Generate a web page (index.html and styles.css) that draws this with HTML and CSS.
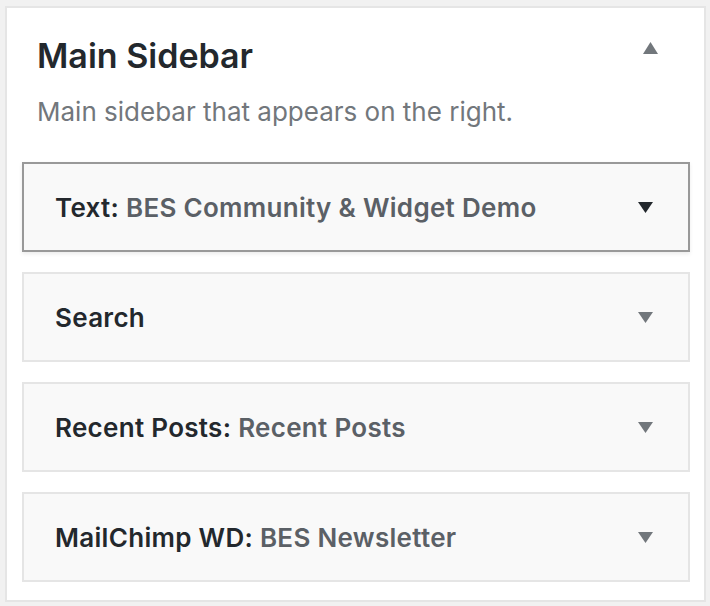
FILE: index.html
```html
<!DOCTYPE html>
<html lang="en">
<head>
<meta charset="utf-8">
<title>Main Sidebar</title>
<link rel="stylesheet" href="styles.css">
</head>
<body>
<section class="panel">
  <header class="panel-head">
    <h2 class="panel-title">Main Sidebar</h2>
    <span class="toggle toggle-up" aria-hidden="true">
      <svg width="15" height="12" viewBox="0 0 15 12"><path d="M7.5 0 L15 12 L0 12 Z" fill="#72777c"/></svg>
    </span>
  </header>
  <p class="panel-desc">Main sidebar that appears on the right.</p>
  <div class="widgets">
    <div class="widget widget-active">
      <span class="widget-title">Text:<span class="in-title"> BES Community &amp; Widget Demo</span></span>
      <span class="toggle"><svg width="15" height="11" viewBox="0 0 15 11"><path d="M0 0 L15 0 L7.5 11 Z" fill="#23282d"/></svg></span>
    </div>
    <div class="widget">
      <span class="widget-title">Search</span>
      <span class="toggle"><svg width="15" height="11" viewBox="0 0 15 11"><path d="M0 0 L15 0 L7.5 11 Z" fill="#72777c"/></svg></span>
    </div>
    <div class="widget">
      <span class="widget-title">Recent Posts:<span class="in-title"> Recent Posts</span></span>
      <span class="toggle"><svg width="15" height="11" viewBox="0 0 15 11"><path d="M0 0 L15 0 L7.5 11 Z" fill="#72777c"/></svg></span>
    </div>
    <div class="widget">
      <span class="widget-title">MailChimp WD:<span class="in-title"> BES Newsletter</span></span>
      <span class="toggle"><svg width="15" height="11" viewBox="0 0 15 11"><path d="M0 0 L15 0 L7.5 11 Z" fill="#72777c"/></svg></span>
    </div>
  </div>
</section>
</body>
</html>
```

FILE: styles.css
```css
html, body {
  margin: 0;
  background: #f1f1f1;
}
body {
  padding: 6px 4px 4px 5px;
  font-family: Inter, "Noto Sans", "Liberation Sans", sans-serif;
  color: #23282d;
}
.panel {
  box-sizing: border-box;
  width: 701px;
  height: 596px;
  background: #fff;
  border: 2px solid #e5e5e5;
  padding: 0 14px 0 15px;
}
.panel-head {
  display: flex;
  justify-content: space-between;
  align-items: flex-start;
  padding: 28px 32px 0 15px;
}
.panel-title {
  margin: 0;
  font-size: 34px;
  font-weight: 600;
  line-height: 40px;
}
.toggle-up {
  display: flex;
  margin-top: 6px;
}
.panel-desc {
  margin: 20px 0 0 15px;
  font-size: 26px;
  line-height: 32px;
  color: #72777c;
}
.widgets {
  display: flex;
  flex-direction: column;
  gap: 20px;
  margin-top: 34px;
}
.widget {
  box-sizing: border-box;
  height: 90px;
  display: flex;
  align-items: center;
  justify-content: space-between;
  padding: 0 35px 0 31px;
  background: #f9f9f9;
  border: 2px solid #e5e5e5;
}
.widget-active {
  border-color: #999;
  box-shadow: 0 2px 4px rgba(0, 0, 0, 0.08);
}
.widget-title {
  font-size: 26px;
  font-weight: 600;
  letter-spacing: 0.3px;
  color: #23282d;
}
.in-title {
  color: #5b6066;
}
.toggle {
  display: flex;
}
```
